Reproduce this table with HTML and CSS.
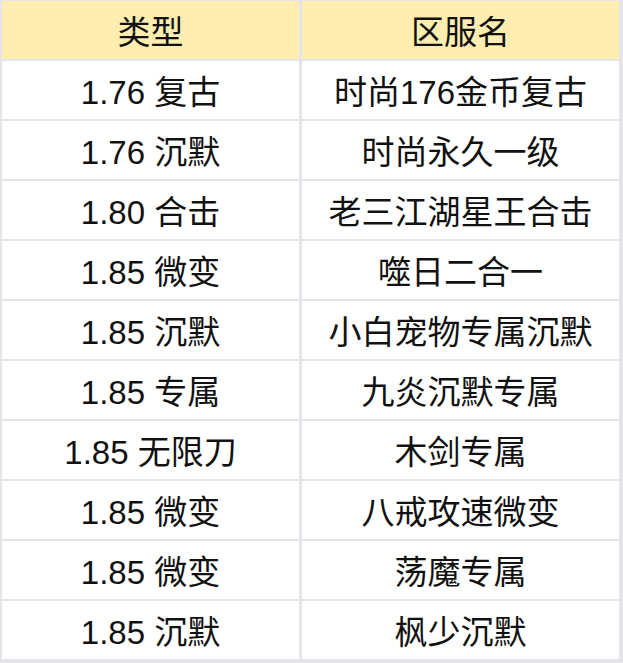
FILE: index.html
```html
<!DOCTYPE html>
<html lang="zh-CN">
<head>
<meta charset="utf-8">
<title>区服列表</title>
<link rel="stylesheet" href="styles.css">
</head>
<body>
<div class="table">
  <div class="cell head">类型</div><div class="cell head">区服名</div>
  <div class="cell">1.76 复古</div><div class="cell">时尚176金币复古</div>
  <div class="cell">1.76 沉默</div><div class="cell">时尚永久一级</div>
  <div class="cell">1.80 合击</div><div class="cell">老三江湖星王合击</div>
  <div class="cell">1.85 微变</div><div class="cell">噬日二合一</div>
  <div class="cell">1.85 沉默</div><div class="cell">小白宠物专属沉默</div>
  <div class="cell">1.85 专属</div><div class="cell">九炎沉默专属</div>
  <div class="cell">1.85 无限刀</div><div class="cell">木剑专属</div>
  <div class="cell">1.85 微变</div><div class="cell">八戒攻速微变</div>
  <div class="cell">1.85 微变</div><div class="cell">荡魔专属</div>
  <div class="cell">1.85 沉默</div><div class="cell">枫少沉默</div>
</div>
</body>
</html>
```
FILE: styles.css
```css
html, body {
  margin: 0;
  padding: 0;
  background: #ffffff;
}
.table {
  display: grid;
  grid-template-columns: 297px 317px;
  grid-auto-rows: 58px;
  gap: 2px 3px;
  padding: 1px 4px 4px 2px;
  width: 623px;
  box-sizing: border-box;
  background: #e4e4e9;
}
.cell {
  background: #ffffff;
  display: flex;
  align-items: center;
  justify-content: center;
  font-family: "Liberation Sans", "Noto Sans CJK SC", sans-serif;
  font-size: 33px;
  color: #111111;
  white-space: nowrap;
}
.head {
  background: #ffeeb0;
}
```
